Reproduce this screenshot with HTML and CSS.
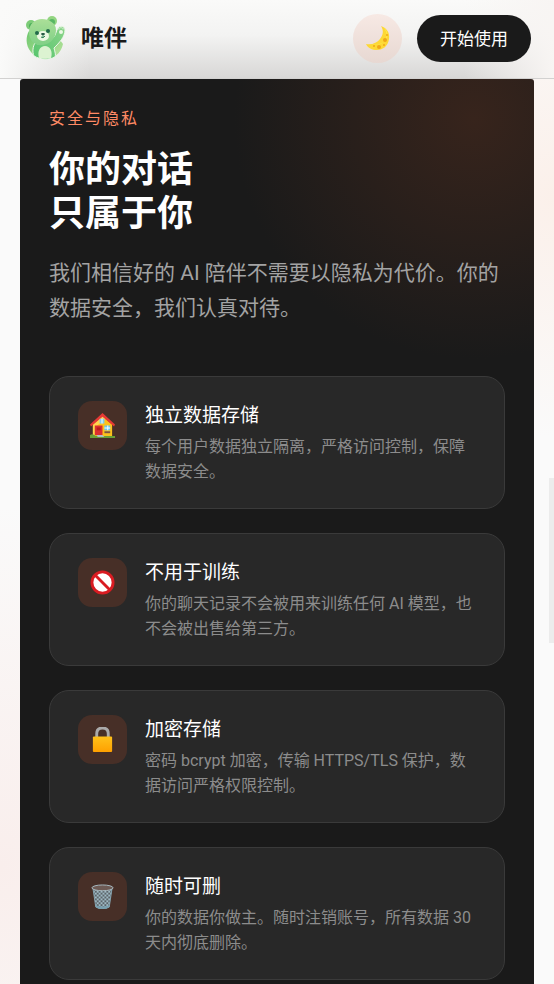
FILE: index.html
```html
<!DOCTYPE html>
<html lang="zh-CN">
	<head>
		<meta charset="UTF-8" />
		<meta name="viewport" content="width=device-width, initial-scale=1.0" />
		<title>唯伴</title>
		<link rel="stylesheet" href="styles.css">
	</head>
	<body>
		<header class="nav">
			<a class="brand" href="#">
				<svg class="logo" viewBox="0 0 42 44" aria-hidden="true">
					<defs>
						<linearGradient id="fur" x1="0" y1="0" x2="0" y2="1">
							<stop offset="0" stop-color="#abdf98" />
							<stop offset="1" stop-color="#80d086" />
						</linearGradient>
						<linearGradient id="body" x1="0" y1="1" x2="1" y2="0">
							<stop offset="0" stop-color="#55c46c" />
							<stop offset="1" stop-color="#8bd48a" />
						</linearGradient>
						<linearGradient id="back" x1="0" y1="0" x2="1" y2="1">
							<stop offset="0" stop-color="#6cc76c" />
							<stop offset="1" stop-color="#b9e49f" />
						</linearGradient>
					</defs>
					<path d="M4 15C1 20 0 29 6 36c4 5 9 7 14 7 8 0 16-5 18-15l-6-8L18 12z" fill="url(#back)" />
					<path d="M10 27c4 2 13 1 18-5 3-3 3-7 5-10 2-3 7-2 7 2 0 7-6 13-11 18 1 4 2 7 1 9-6 3-14 3-21-1-2-4-1-10 1-13z" fill="url(#body)" stroke="#eef7ea" stroke-width="1" />
					<circle cx="6" cy="9" r="5" fill="#7dcc78" />
					<circle cx="27" cy="5" r="5" fill="#93d581" />
					<circle cx="7" cy="10" r="3" fill="#4eae5c" />
					<circle cx="27" cy="6" r="3" fill="#58b764" />
					<path d="M4 16C4 8 10 3 17 3s14 4 14 11-5 14-13 15S4 25 4 16z" fill="url(#fur)" />
					<ellipse cx="18" cy="20" rx="6" ry="5" fill="#ecf8e3" />
					<circle cx="12" cy="17" r="2" fill="#236a4a" />
					<circle cx="23" cy="15" r="2" fill="#236a4a" />
					<ellipse cx="18" cy="18" rx="2" ry="1" fill="#174c38" />
					<path d="M18 19v2m-2 0q2 2 4-1" fill="none" stroke="#287a50" stroke-width="1" />
					<path d="M14 42c-2-7 1-12 6-12s8 5 6 12c-4 1-8 1-12 0z" fill="#dcf3d1" />
					<circle cx="36" cy="16" r="2" fill="#eaf8e4" />
					<path d="M34 13v-1m2 0v-1m2 2v-1" stroke="#eaf8e4" stroke-linecap="round" />
				</svg>
				<span class="brand-name">唯伴</span>
			</a>
			<div class="nav-actions">
				<button class="theme-toggle" type="button" aria-label="切换主题">
					<svg viewBox="0 0 24 24" aria-hidden="true">
						<path d="M15 0c6 2 9 7 8 13-1 7-6 11-12 11-5 0-9-2-11-6 6 1 11-1 14-5s4-8 1-13z" fill="#fdd835" />
						<path d="M17 1c4 4 5 9 2 13-3 5-9 6-14 4 5 2 12 0 15-5 3-4 1-9-3-12z" fill="#ffee58" />
						<g fill="#f0a818">
							<circle cx="19" cy="14" r="2" />
							<circle cx="13" cy="21" r="2" />
							<circle cx="21" cy="9" r="1" />
							<circle cx="18" cy="19" r="1" />
							<circle cx="8" cy="20" r="1" />
						</g>
					</svg>
				</button>
				<button class="start" type="button">开始使用</button>
			</div>
		</header>

		<main>
			<section class="privacy">
				<p class="eyebrow">安全与隐私</p>
				<h1>你的对话<br />只属于你</h1>
				<p class="intro">我们相信好的 AI 陪伴不需要以隐私为代价。你的数据安全，我们认真对待。</p>
				<div class="cards">
					<article class="card">
						<div class="icon">
							<svg viewBox="0 0 26 26" aria-hidden="true">
								<path d="M3 12L13 3l10 9v12H3z" fill="#fcc21b" />
								<path d="M3 12L13 3l3 3L5 15v9H3z" fill="#ffd54f" />
								<path d="M0 12L13 0l13 12-1 2L13 4 1 14z" fill="#e53935" />
								<path d="M10 6h5v5h-5z" fill="#82ccec" />
								<path d="M12 6h1v5h-1z" fill="#fff" />
								<path d="M5 13h8v10H5z" fill="#da2f2f" />
								<path d="M7 15h4v3H7z" fill="#b71c1c" />
								<path d="M15 13h6v5h-6z" fill="#64c8f0" />
								<path d="M15 15h6v1h-6zM18 13h1v5h-1z" fill="#fff" />
								<path d="M15 19h6v2h-6z" fill="#795548" />
								<path d="M0 23q3-2 6 1h20v2H0z" fill="#689f38" />
								<path d="M7 23h6l2 2H8z" fill="#b0bec5" />
							</svg>
						</div>
						<div class="card-text">
							<h2>独立数据存储</h2>
							<p>每个用户数据独立隔离，严格访问控制，保障数据安全。</p>
						</div>
					</article>
					<article class="card">
						<div class="icon">
							<svg viewBox="0 0 26 26" aria-hidden="true">
								<circle cx="13" cy="13" r="11" fill="#fff" stroke="#d91c22" stroke-width="3" />
								<path d="M5 5l16 16" stroke="#d91c22" stroke-width="3" />
							</svg>
						</div>
						<div class="card-text">
							<h2>不用于训练</h2>
							<p>你的聊天记录不会被用来训练任何 AI 模型，也不会被出售给第三方。</p>
						</div>
					</article>
					<article class="card">
						<div class="icon">
							<svg viewBox="0 0 26 26" aria-hidden="true">
								<defs>
									<linearGradient id="lock" x1="0" y1="0" x2="0" y2="1">
										<stop offset="0" stop-color="#ffc11a" />
										<stop offset="1" stop-color="#ffa000" />
									</linearGradient>
								</defs>
								<path d="M7 11V7q0-6 6-6t6 6v4" fill="none" stroke="#aaa" stroke-width="3" />
								<rect x="3" y="10" width="20" height="16" rx="1" fill="url(#lock)" />
							</svg>
						</div>
						<div class="card-text">
							<h2>加密存储</h2>
							<p>密码 bcrypt 加密，传输 HTTPS/TLS 保护，数据访问严格权限控制。</p>
						</div>
					</article>
					<article class="card">
						<div class="icon">
							<svg viewBox="0 0 26 26" aria-hidden="true">
								<defs>
									<pattern id="mesh" width="4" height="4" patternUnits="userSpaceOnUse">
										<path d="M0 0l4 4M4 0L0 4" stroke="#9fb9c4" stroke-width="1" />
									</pattern>
								</defs>
								<path d="M3 4h20l-3 20q-7 4-14 0z" fill="#5b6469" />
								<path d="M3 4h20l-3 20q-7 4-14 0z" fill="url(#mesh)" />
								<path d="M3 4l3 20q7 4 14 0l3-20" fill="none" stroke="#84a3b0" stroke-width="1" />
								<path d="M6 22q7 3 14 0v2q-7 4-14 0z" fill="#78a0b0" />
								<ellipse cx="13" cy="4" rx="11" ry="3" fill="#6d5a54" stroke="#a9bbc3" stroke-width="1" />
							</svg>
						</div>
						<div class="card-text">
							<h2>随时可删</h2>
							<p>你的数据你做主。随时注销账号，所有数据 30 天内彻底删除。</p>
						</div>
					</article>
				</div>
			</section>
		</main>
		<div class="scroll-thumb"></div>
	</body>
</html>
```
FILE: styles.css
```css
* {
	box-sizing: border-box;
	margin: 0;
	padding: 0;
}
html {
	scrollbar-width: none;
}
body {
	font-family: Roboto, "Noto Sans CJK SC", sans-serif;
	color: #1a1a1a;
	background:
		radial-gradient(circle at 100% 20%, #fbf0ea, transparent 240px),
		radial-gradient(circle at 0 88%, #f9eeec, transparent 360px),
		#fafafa;
}
.nav {
	display: flex;
	align-items: center;
	justify-content: space-between;
	height: 79px;
	padding: 0 23px 2px 25px;
	border-bottom: 1px solid #d2d1d0;
	background:
		linear-gradient(90deg, #fafaf9, transparent 90px, transparent calc(100% - 90px), #f8f5f3),
		linear-gradient(#fafaf9, #f3f3f2 45%, #d8d7d6);
}
.brand {
	display: flex;
	align-items: center;
	gap: 14px;
	color: #1a1a1a;
	font-size: 23px;
	font-weight: 700;
	text-decoration: none;
}
.brand-name {
	padding-bottom: 4px;
}
.logo {
	width: 42px;
	height: 44px;
}
.nav-actions {
	display: flex;
	align-items: center;
	gap: 15px;
}
button {
	border: none;
	font-family: inherit;
	cursor: pointer;
}
.theme-toggle {
	display: flex;
	align-items: center;
	justify-content: center;
	width: 49px;
	height: 49px;
	border-radius: 50%;
	background: linear-gradient(#f7e9e4, #e7d8d2);
}
.theme-toggle svg {
	width: 24px;
	height: 24px;
}
.start {
	height: 47px;
	padding: 0 23px 2px;
	border-radius: 24px;
	background: #1a1a1a;
	color: #fff;
	font-size: 17px;
}
.privacy {
	margin: 0 20px;
	padding: 28px 29px 4px;
	border-radius: 3px 3px 0 0;
	background:
		radial-gradient(circle at calc(100% - 60px) 40px, #37241c, #1a1a1a 240px);
	color: #fff;
}
.eyebrow {
	margin-bottom: 17px;
	color: #ff8a65;
	font-size: 16px;
	line-height: 24px;
	letter-spacing: 2px;
}
h1 {
	margin-bottom: 20px;
	font-size: 36px;
	line-height: 44px;
}
.intro {
	margin-bottom: 50px;
	color: #a3a3a3;
	font-size: 21px;
	line-height: 35px;
}
.cards {
	display: grid;
	gap: 24px;
}
.card {
	display: flex;
	gap: 18px;
	padding: 24px 28px;
	border: 1px solid #3a3a3a;
	border-radius: 20px;
	background: #282828;
}
.icon {
	display: flex;
	flex: none;
	align-items: center;
	justify-content: center;
	width: 49px;
	height: 49px;
	border-radius: 14px;
	background: #472f27;
}
.icon svg {
	width: 25px;
	height: 25px;
}
h2 {
	margin-bottom: 3px;
	font-size: 19px;
	font-weight: 400;
	line-height: 30px;
}
.card p {
	color: #8c8c8c;
	font-size: 16px;
	line-height: 25px;
}
.scroll-thumb {
	position: fixed;
	top: 478px;
	right: 0;
	width: 5px;
	height: 165px;
	background: #ececec;
}
```
